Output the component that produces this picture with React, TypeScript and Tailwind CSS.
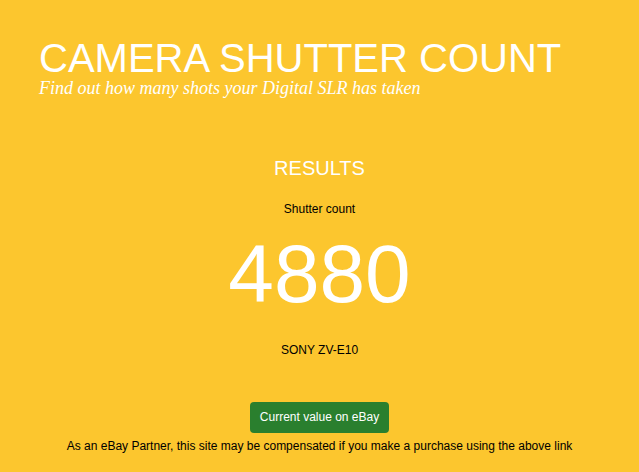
export default function App() {
  return (
    <div className="min-h-[472px] w-full bg-[#fcc62e] font-['Liberation_Sans',Arial,sans-serif]">
      <header className="px-[39px] pt-[36px]">
        <h1 className="whitespace-nowrap text-[40px] leading-[44px] text-white">CAMERA SHUTTER COUNT</h1>
        <p className="-mt-[2px] font-['Liberation_Serif',Georgia,serif] text-[18px] italic leading-[20px] text-white">
          Find out how many shots your Digital SLR has taken
        </p>
      </header>

      <main className="flex flex-col items-center pt-[58px] text-center">
        <h2 className="text-[20px] leading-[24px] text-white">RESULTS</h2>
        <div className="mt-[22px] text-[12px] leading-[14px] text-black">Shutter count</div>
        <div className="mt-[10px] text-[82px] leading-[96px] text-white">4880</div>
        <div className="mt-[21px] text-[12px] leading-[14px] text-black">SONY ZV-E10</div>
        <a
          href="#"
          className="mt-[45px] rounded-[4px] bg-[#2a7f2e] px-[10px] py-[8px] text-[12px] leading-[15px] text-white"
        >
          Current value on eBay
        </a>
        <p className="mt-[6px] text-[12px] leading-[14px] text-black">
          As an eBay Partner, this site may be compensated if you make a purchase using the above link
        </p>
      </main>
    </div>
  );
}
